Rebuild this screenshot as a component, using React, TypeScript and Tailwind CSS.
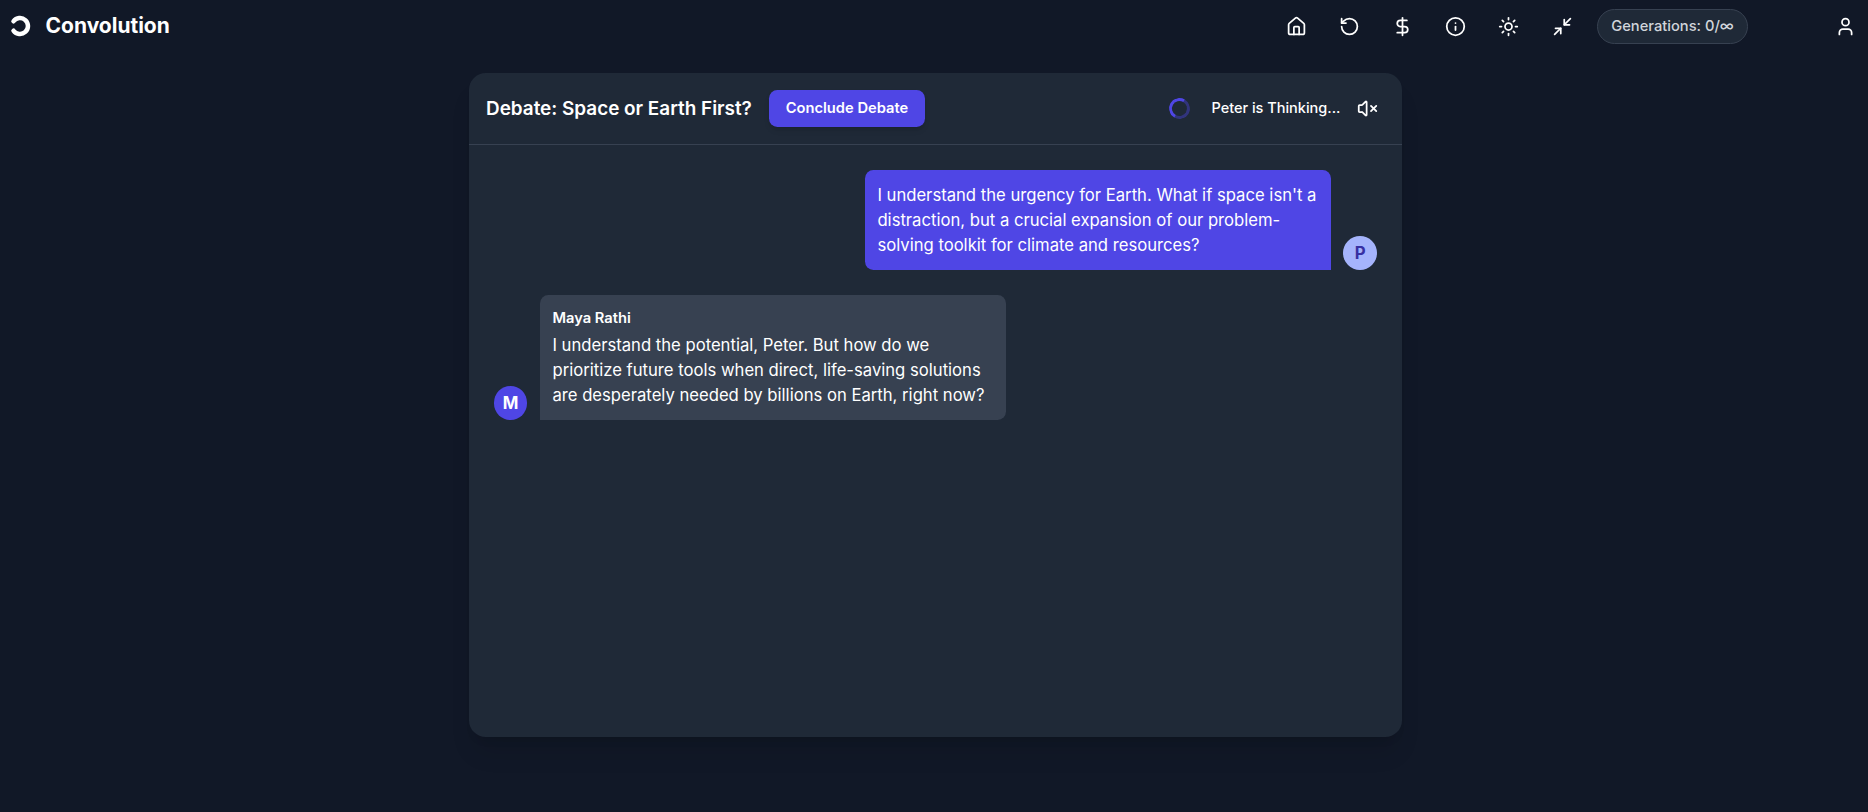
import { Home, RotateCcw, DollarSign, Info, Sun, Minimize2, User, VolumeX } from "lucide-react";

const NAV_ICONS = [Home, RotateCcw, DollarSign, Info, Sun, Minimize2];

function Logo() {
  return (
    <svg viewBox="0 0 24 24" className="h-6 w-6 text-white" fill="none" stroke="currentColor" strokeWidth="4.5" strokeLinecap="round">
      <path d="M5.5 7.3A8 8 0 1 1 5.5 16.7" />
    </svg>
  );
}

function Avatar({ letter, className }: { letter: string; className: string }) {
  return (
    <div className={`flex h-[33.6px] w-[33.6px] shrink-0 items-center justify-center rounded-full text-[16.8px] font-bold ${className}`}>
      {letter}
    </div>
  );
}

export default function App() {
  return (
    <div className="flex h-[812px] flex-col overflow-hidden bg-[#111827] font-['Inter',sans-serif] text-white">
      <header className="flex h-[52px] shrink-0 items-center pl-[8px] pr-[12px]">
        <Logo />
        <span className="ml-[13.5px] text-[21px] font-bold">Convolution</span>
        <div className="ml-auto flex items-center">
          {NAV_ICONS.map((Icon, i) => (
            <button key={i} className="flex h-10 w-[53.2px] items-center justify-center text-white">
              <Icon className="h-[21px] w-[21px]" />
            </button>
          ))}
          <div className="ml-[8.3px] flex h-[35px] w-[151px] items-center justify-center rounded-full border border-[#374151] bg-[#1f2937] text-[14.7px] font-medium text-[#d1d5db]">
            Generations: 0/∞
          </div>
          <User className="ml-[87px] h-[21px] w-[21px]" />
        </div>
      </header>

      <main className="flex flex-1 justify-center pl-[2px] pt-[21px]">
        <section className="flex h-[664px] w-[933px] flex-col rounded-[16.8px] bg-[#1f2937] shadow-xl">
          <div className="flex h-[72px] shrink-0 items-center border-b border-[#374151] pl-[17.5px] pr-[24px]">
            <h1 className="pt-px text-[18.9px] font-semibold">Debate: Space or Earth First?</h1>
            <button className="ml-[17px] h-[37px] rounded-[8.4px] bg-[#4f46e5] px-[16.8px] text-[14.7px] font-semibold shadow-md">Conclude Debate</button>
            <div className="ml-auto flex items-center">
              <div className="h-[21px] w-[21px] -rotate-[15deg] rounded-full border-[3.5px] border-[#4f46e5]/40 border-l-[#4f46e5] border-t-[#4f46e5]" />
              <span className="ml-[21px] pb-px text-[14.5px] font-medium leading-[20px]">Peter is Thinking...</span>
              <VolumeX className="ml-[16px] h-[21px] w-[21px]" />
            </div>
          </div>

          <div className="flex flex-1 flex-col gap-[25px] pl-[25.2px] pr-[24.5px] pt-[25px]">
            <div className="flex items-end justify-end gap-[12.6px]">
              <div className="w-[466px] rounded-[8.4px] rounded-br-none bg-[#4f46e5] px-[12.6px] pb-3 pt-[13px] text-[16.65px] leading-[25px]">
                I understand the urgency for Earth. What if space isn't a distraction, but a crucial expansion of our problem-solving toolkit for climate and resources?
              </div>
              <Avatar letter="P" className="bg-[#a5b4fc] text-[#3730a3]" />
            </div>
            <div className="flex items-end gap-[12.6px]">
              <Avatar letter="M" className="bg-[#4f46e5] text-white" />
              <div className="w-[466px] rounded-[8.4px] rounded-bl-none bg-[#374151] px-[12.6px] pb-3 pt-[13px] text-[16.65px] leading-[25px]">
                <div className="mb-[4px] text-[14.7px] font-semibold leading-[21px]">Maya Rathi</div>
                I understand the potential, Peter. But how do we prioritize future tools when direct, life-saving solutions are desperately needed by billions on Earth, right now?
              </div>
            </div>
          </div>
        </section>
      </main>
    </div>
  );
}
